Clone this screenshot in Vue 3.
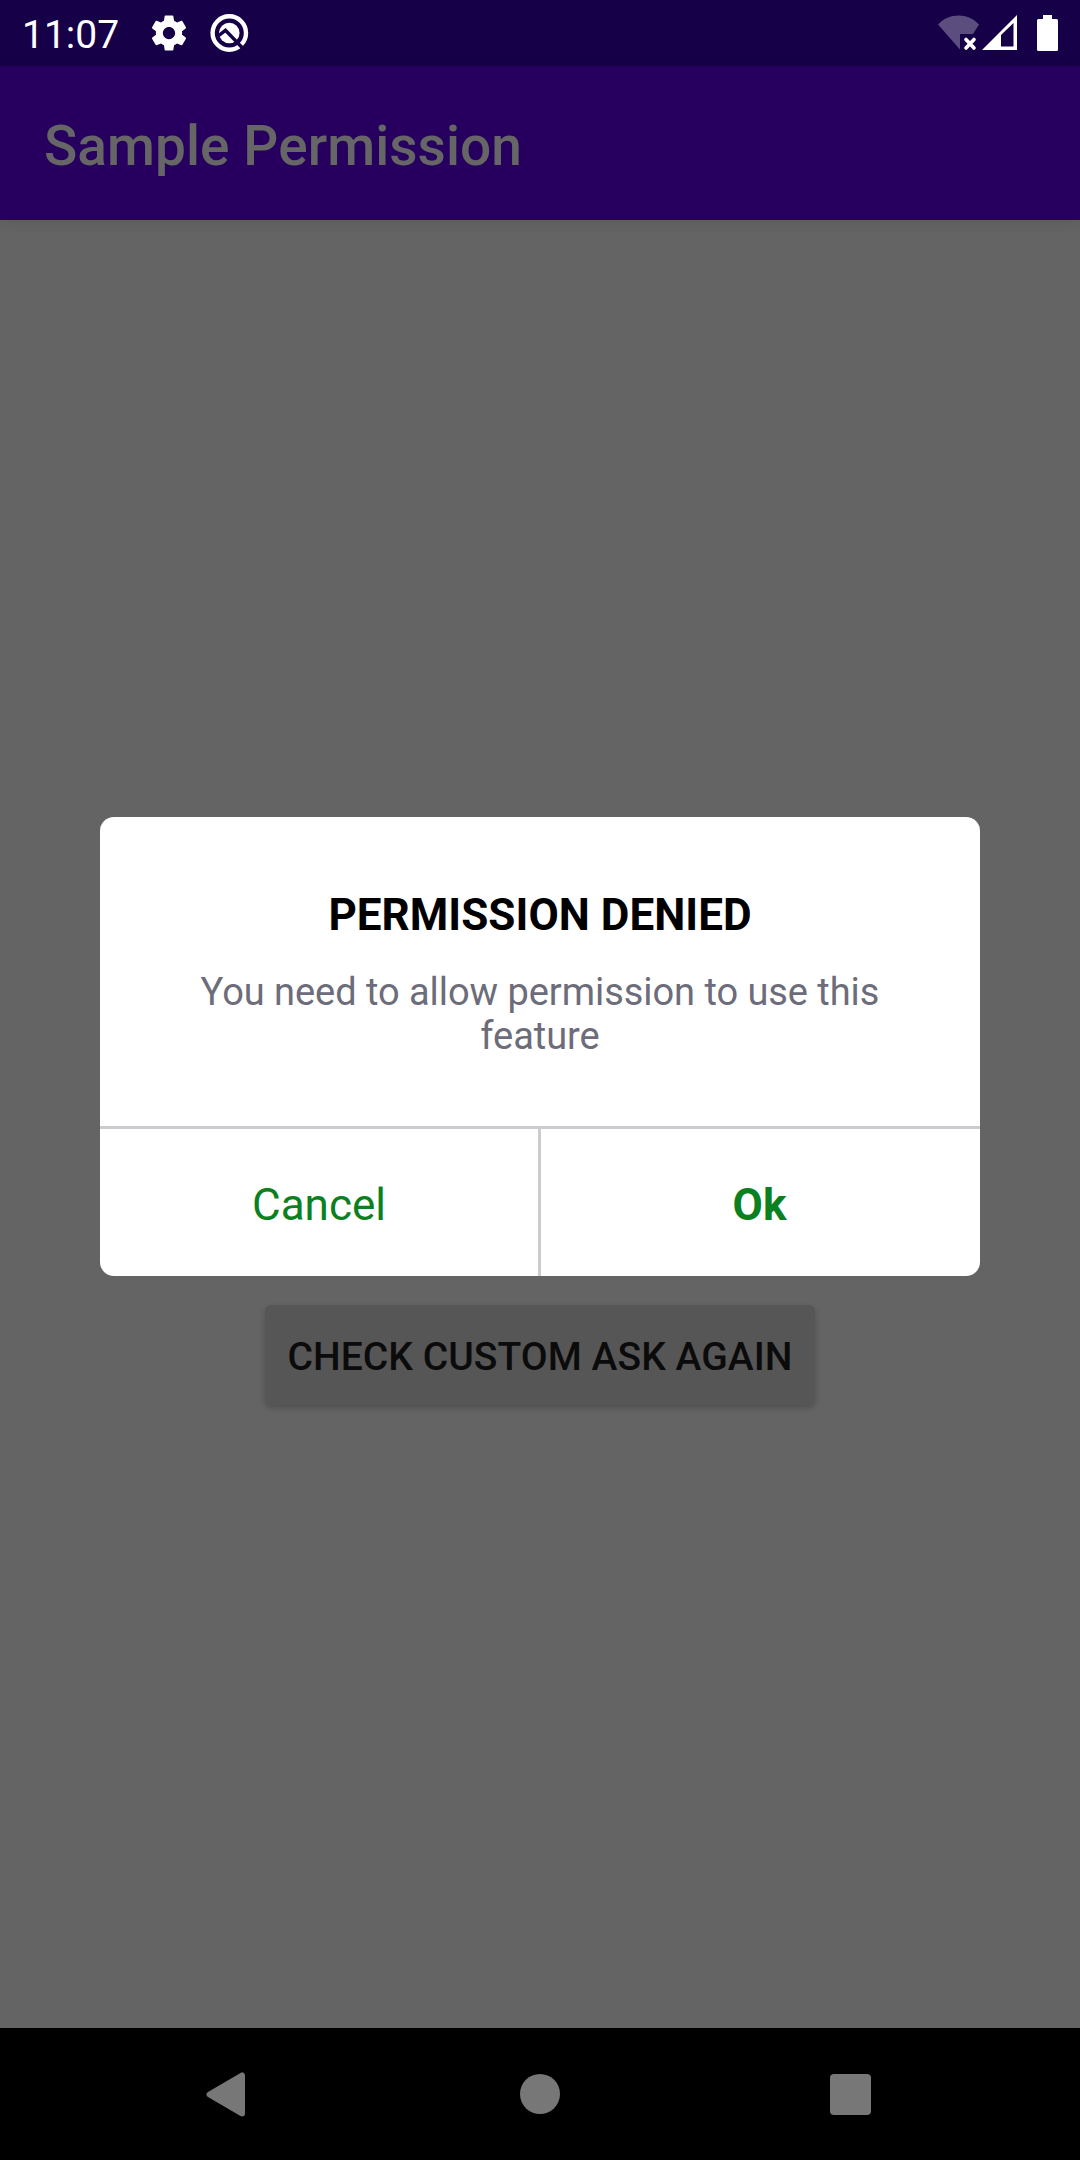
<script setup>
const appTitle = 'Sample Permission'
const dialog = {
  title: 'PERMISSION DENIED',
  message: 'You need to allow permission to use this feature',
}
</script>

<template>
  <div class="screen">
    <header class="status">
      <div class="status-left">
        <span class="clock">11:07</span>
        <svg class="gear" viewBox="0 0 24 24" fill="#fff">
          <path d="M19.43 12.98c.04-.32.07-.64.07-.98s-.03-.66-.07-.98l2.11-1.65c.19-.15.24-.42.12-.64l-2-3.46c-.12-.22-.39-.3-.61-.22l-2.49 1c-.52-.4-1.08-.73-1.69-.98l-.38-2.65C14.46 2.18 14.25 2 14 2h-4c-.25 0-.46.18-.49.42l-.38 2.65c-.61.25-1.17.59-1.69.98l-2.49-1c-.23-.09-.49 0-.61.22l-2 3.46c-.13.22-.07.49.12.64l2.11 1.65c-.04.32-.07.65-.07.98s.03.66.07.98l-2.11 1.65c-.19.15-.24.42-.12.64l2 3.46c.12.22.39.3.61.22l2.49-1c.52.4 1.08.73 1.69.98l.38 2.65c.03.24.24.42.49.42h4c.25 0 .46-.18.49-.42l.38-2.65c.61-.25 1.17-.59 1.69-.98l2.49 1c.23.09.49 0 .61-.22l2-3.46c.12-.22.07-.49-.12-.64l-2.11-1.65zM12 15.5c-1.93 0-3.500-1.570-3.500-3.500s1.570-3.500 3.500-3.500 3.500 1.570 3.500 3.500-1.570 3.500-3.500 3.500z" />
        </svg>
        <svg class="q-logo" viewBox="0 0 40 40" fill="none">
          <circle cx="19.300" cy="20" r="16.700" stroke="#fff" stroke-width="4.400" />
          <circle cx="19.300" cy="20" r="10.300" fill="#fff" />
          <path d="M7.500 23.500L15.500 17.300L33 35.500" stroke="#160048" stroke-width="3.400" />
        </svg>
      </div>
      <svg class="system" viewBox="0 0 124 40">
        <path d="M1 11.500C12 -.5 31 -.5 42 11.500L36 21H23V36.500Z" fill="#fff" opacity=".3" />
        <path d="M29 26.500L37 35M37 26.500L29 35" stroke="#fff" stroke-width="3.600" stroke-linecap="round" />
        <path fill="#fff" fill-rule="evenodd" d="M45 37L80 2V37ZM64 22V33.500H76.500V10Z" />
        <path fill="#fff" d="M106 2h9v4h4.500q1.500 0 1.500 1.500v29q0 1.500-1.500 1.500h-18q-1.500 0-1.500-1.500v-29q0-1.500 1.500-1.500h4.500z" />
      </svg>
    </header>

    <div class="app-bar">{{ appTitle }}</div>

    <main class="content">
      <button class="check">CHECK CUSTOM ASK AGAIN</button>
    </main>

    <nav class="nav">
      <svg viewBox="0 0 48 48"><path d="M36 5.500V43.500L3.500 24.500Z" fill="#777" stroke="#777" stroke-width="6" stroke-linejoin="round" /></svg>
      <svg viewBox="0 0 48 48"><circle cx="24" cy="24" r="20" fill="#777" /></svg>
      <svg viewBox="0 0 48 48"><rect x="4" y="4" width="41" height="41" rx="4" fill="#777" /></svg>
    </nav>

    <section class="dialog">
      <div class="dialog-body">
        <h1>{{ dialog.title }}</h1>
        <p>{{ dialog.message }}</p>
      </div>
      <div class="actions">
        <button class="cancel">Cancel</button>
        <button class="ok">Ok</button>
      </div>
    </section>
  </div>
</template>

<style>
body { margin: 0; }
</style>

<style scoped>
.screen {
  position: relative;
  display: flex;
  flex-direction: column;
  width: 1080px;
  height: 2160px;
  overflow: hidden;
  background: #646464;
  font-family: Roboto, "Liberation Sans", sans-serif;
}
button {
  margin: 0;
  border: 0;
  background: none;
  font-family: inherit;
}
.status {
  display: flex;
  justify-content: space-between;
  height: 66px;
  background: #160048;
}
.status-left {
  display: flex;
  align-items: flex-start;
  padding-left: 22px;
}
.clock {
  width: 125.5px;
  padding-top: 4px;
  color: #fff;
  font-size: 39px;
  line-height: 62px;
}
.gear {
  width: 42px;
  height: 42px;
  margin-top: 12px;
}
.q-logo {
  width: 40px;
  height: 40px;
  margin: 13px 0 0 20.5px;
}
.system {
  width: 124px;
  height: 40px;
  margin: 13px 19px 0 0;
}
.app-bar {
  position: relative;
  box-sizing: border-box;
  height: 154px;
  padding: 6px 44px 0;
  background: #27005f;
  box-shadow: 0 2px 12px rgba(0, 0, 0, 0.1);
  color: #666;
  font-size: 55px;
  font-weight: 500;
  letter-spacing: 0.06px;
  line-height: 148px;
}
.content {
  display: flex;
  flex: 1;
  flex-direction: column;
  align-items: center;
  padding-top: 1085px;
}
.check {
  width: 550px;
  height: 100px;
  padding: 4px 0 0;
  border-radius: 6px;
  background: #565656;
  box-shadow: 0 3px 6px rgba(0, 0, 0, 0.2);
  color: #0b0b0b;
  font-size: 39px;
  font-weight: 500;
  letter-spacing: 0.05px;
  line-height: 96px;
  white-space: nowrap;
}
.nav {
  display: flex;
  align-items: center;
  justify-content: center;
  gap: 262px;
  height: 132px;
  background: #000;
}
.nav svg {
  width: 48px;
  height: 48px;
}
.dialog {
  position: absolute;
  top: 817px;
  left: 100px;
  width: 880px;
  height: 459px;
  overflow: hidden;
  border-radius: 14px;
  background: #fff;
}
.dialog-body {
  box-sizing: border-box;
  height: 312px;
  padding: 72px 80px 0;
  border-bottom: 3px solid #cbcbd0;
  text-align: center;
}
h1 {
  margin: 0 0 29px;
  color: #000;
  font-size: 44px;
  font-weight: 700;
  letter-spacing: 0.03px;
  line-height: 52px;
}
p {
  margin: 0;
  color: #6c6c7a;
  font-size: 38px;
  letter-spacing: -0.05px;
  line-height: 44px;
}
.actions {
  display: flex;
  height: 147px;
}
.actions button {
  box-sizing: border-box;
  padding: 5px 0 0;
  color: #0a8020;
  font-size: 44px;
  line-height: 142px;
}
.cancel {
  width: 441px;
  border-right: 3px solid #cbcbd0;
}
.actions .ok {
  flex: 1;
  padding-right: 2px;
  font-weight: 700;
}
</style>
